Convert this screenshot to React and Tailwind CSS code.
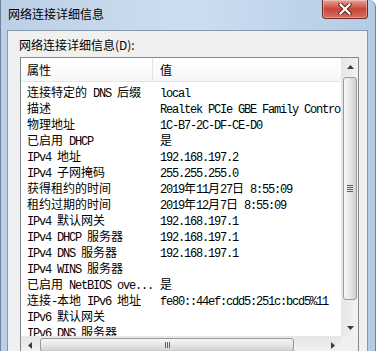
import React from "react";

const rows = [
    ['连接特定的 DNS 后缀', 'local'],
    ['描述', 'Realtek PCIe GBE Family Controller'],
    ['物理地址', '1C-B7-2C-DF-CE-D0'],
    ['已启用 DHCP', '是'],
    ['IPv4 地址', '192.168.197.2'],
    ['IPv4 子网掩码', '255.255.255.0'],
    ['获得租约的时间', '2019年11月27日 8:55:09'],
    ['租约过期的时间', '2019年12月7日 8:55:09'],
    ['IPv4 默认网关', '192.168.197.1'],
    ['IPv4 DHCP 服务器', '192.168.197.1'],
    ['IPv4 DNS 服务器', '192.168.197.1'],
    ['IPv4 WINS 服务器', ''],
    ['已启用 NetBIOS ove...', '是'],
    ['连接-本地 IPv6 地址', 'fe80::44ef:cdd5:251c:bcd5%11'],
    ['IPv6 默认网关', ''],
    ['IPv6 DNS 服务器', ''],
];

// SimSun-like: ascii half width (6px), cjk full width (12px)
const Mixed = ({ text }) => {
    const parts = text.match(/[\x00-\x7f]+|[^\x00-\x7f]+/g) || [];
    return parts.map((p, i) =>
        /^[\x00-\x7f]/.test(p)
            ? <span key={i} className="font-['Liberation_Mono',monospace] text-[12px] tracking-[-1.2px]">{p}</span>
            : <span key={i} className="text-[12px]">{p}</span>
    );
};

const Arrow = ({ dir }) => {
    if (dir === 'left' || dir === 'right') {
        return (
            <svg width="4" height="7" viewBox="0 0 4 7">
                <path d={dir === 'left' ? "M4 0 L4 7 L0 3.5 Z" : "M0 0 L4 3.5 L0 7 Z"} fill="#3c3c3c" />
            </svg>
        );
    }
    return (
        <svg width="7" height="4" viewBox="0 0 7 4">
            <path d={dir === 'up' ? "M3.5 0 L7 4 L0 4 Z" : "M0 0 L7 0 L3.5 4 Z"} fill="#3c3c3c" />
        </svg>
    );
};

const App = () => {
    return (
        <div className="w-[376px] h-[351px] overflow-hidden flex flex-col bg-gradient-to-r from-[#bccfe6] via-[#cddef0] to-[#b4cbe6] text-black font-['Noto_Sans_CJK_SC','Noto_Sans',sans-serif] rounded-tr-[7px] border-r border-l border-[#6f839c]">
            {/* title bar */}
            <div className="h-[30px] shrink-0 flex items-start justify-between">
                <span className="text-[12px] leading-[16px] pl-[7px] pt-[6px]">网络连接详细信息</span>
                <button className="w-[46px] h-[19px] mr-[7px] flex items-center justify-center rounded-b-[4px] border border-t-0 border-[#6b2b25] bg-gradient-to-b from-[#e8a193] via-[#c8463a] to-[#d96b5c] shadow-[inset_0_0_0_1px_rgba(255,255,255,0.35)]">
                    <svg width="14" height="12" viewBox="0 0 14 12">
                        <path d="M2.5 1.5 L11.5 10.5 M11.5 1.5 L2.5 10.5" stroke="#5a1e19" strokeWidth="4" strokeLinecap="square" />
                        <path d="M2.5 1.5 L11.5 10.5 M11.5 1.5 L2.5 10.5" stroke="#fff" strokeWidth="2.2" strokeLinecap="square" />
                    </svg>
                </button>
            </div>

            {/* body */}
            <div className="flex-1 flex pl-[6px] pr-[7px]">
                <div className="flex-1 bg-[#f0f0f0] border border-b-0 border-[#8798ae] flex flex-col">
                    <div className="text-[12px] leading-[16px] mt-[6px] mb-[4px] pl-[11px]">网络连接详细信息(D):</div>
                    <div className="ml-[12px] w-[339px] border border-[#828790] bg-white grid grid-cols-[320px_17px] grid-rows-[278px_17px]">
                        {/* list content */}
                        <div className="overflow-hidden flex flex-col">
                            <div className="h-[24px] shrink-0 flex bg-gradient-to-b from-white to-[#f6f7f9] border-b border-[#e3e4e6]">
                                <div className="w-[132px] shrink-0 border-r border-[#e3e4e6] pl-[6px] text-[12px] leading-[24px]">属性</div>
                                <div className="pl-[7px] text-[12px] leading-[24px]">值</div>
                            </div>
                            {rows.map(([k, v], i) => (
                                <div key={i} className="h-[16px] shrink-0 flex whitespace-pre leading-[16px]">
                                    <div className="w-[132px] shrink-0 overflow-hidden pl-[6px]"><Mixed text={k} /></div>
                                    <div className="pl-[7px]"><Mixed text={v} /></div>
                                </div>
                            ))}
                        </div>

                        {/* vertical scrollbar */}
                        <div className="flex flex-col bg-gradient-to-r from-[#e6e6e6] to-[#f3f3f3] border-l border-[#e8e8e8]">
                            <div className="h-[17px] shrink-0 flex items-center justify-center"><Arrow dir="up" /></div>
                            <div className="mt-[2px] mx-[1px] h-[223px] shrink-0 rounded-[3px] border border-[#999] bg-gradient-to-r from-[#f6f6f6] via-[#e6e6e6] to-[#cfcfcf] flex items-center justify-center">
                                <div className="flex flex-col gap-[1px]">
                                    <div className="w-[6px] h-[1px] bg-[#5f5f5f]" />
                                    <div className="w-[6px] h-[1px] bg-[#5f5f5f]" />
                                    <div className="w-[6px] h-[1px] bg-[#5f5f5f]" />
                                    <div className="w-[6px] h-[1px] bg-[#5f5f5f]" />
                                </div>
                            </div>
                            <div className="flex-1" />
                            <div className="h-[17px] shrink-0 flex items-center justify-center"><Arrow dir="down" /></div>
                        </div>

                        {/* horizontal scrollbar */}
                        <div className="flex bg-gradient-to-b from-[#e6e6e6] to-[#f3f3f3] border-t border-[#e8e8e8]">
                            <div className="w-[17px] shrink-0 flex items-center justify-center"><Arrow dir="left" /></div>
                            <div className="ml-[2px] my-[1px] w-[254px] shrink-0 rounded-[3px] border border-[#999] bg-gradient-to-b from-[#f6f6f6] via-[#e6e6e6] to-[#cfcfcf] flex items-center justify-center">
                                <div className="flex gap-[1px]">
                                    <div className="w-[1px] h-[6px] bg-[#5f5f5f]" />
                                    <div className="w-[1px] h-[6px] bg-[#5f5f5f]" />
                                    <div className="w-[1px] h-[6px] bg-[#5f5f5f]" />
                                </div>
                            </div>
                            <div className="flex-1" />
                            <div className="w-[17px] shrink-0 flex items-center justify-center"><Arrow dir="right" /></div>
                        </div>

                        <div className="bg-[#f0f0f0]" />
                    </div>
                </div>
            </div>
        </div>
    );
}
export default App
